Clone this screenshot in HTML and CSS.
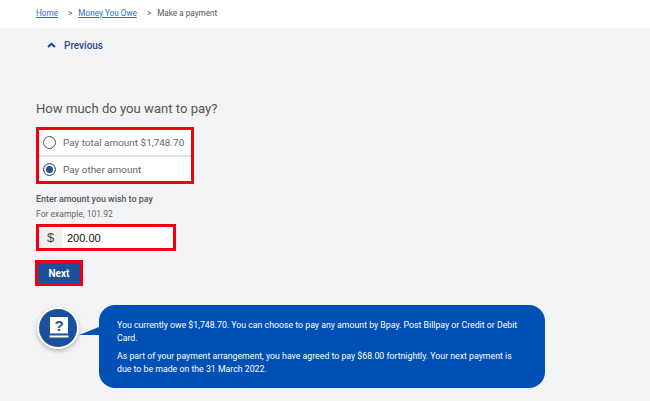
FILE: index.html
```html
<!DOCTYPE html>
<html>
<head>
  <meta charset="utf-8">
  <title>Make a payment</title>
  <link rel="stylesheet" href="styles.css">
</head>
<body>
  <div class="breadcrumb">
    <a href="#">Home</a>
    <span class="sep">&gt;</span>
    <a href="#">Money You Owe</a>
    <span class="sep">&gt;</span>
    <span class="current">Make a payment</span>
  </div>

  <div class="main">
    <div class="previous">
      <svg class="chevron" width="9" height="6" viewBox="0 0 9 6"><path d="M1 5 L4.5 1.8 L8 5" fill="none" stroke="#1a3f8f" stroke-width="2"/></svg>
      <span>Previous</span>
    </div>

    <h1>How much do you want to pay?</h1>

    <div class="radio-group">
      <div class="radio-row divider">
        <span class="radio"></span>
        <span>Pay total amount $1,748.70</span>
      </div>
      <div class="radio-row">
        <span class="radio checked"></span>
        <span>Pay other amount</span>
      </div>
    </div>

    <div class="field-label">Enter amount you wish to pay</div>
    <div class="field-hint">For example, 101.92</div>

    <div class="amount">
      <span class="prefix">$</span>
      <span class="value">200.00</span>
    </div>

    <div class="next-wrap">
      <button class="next">Next</button>
    </div>

    <div class="help">
      <div class="help-icon">
        <svg width="38" height="38" viewBox="0 0 38 38">
          <circle cx="19" cy="19" r="19" fill="#1c4f9c"/>
          <path d="M11 8 H29 V24.5 H11 Z" fill="#fff"/>
          <path d="M10.5 26.5 H29.5 V28.5 H11.5 Q10.5 28.5 10.5 27.5 Z" fill="#fff"/>
          <text x="20" y="21.5" text-anchor="middle" class="help-mark">?</text>
        </svg>
      </div>
      <div class="bubble">
        <p>You currently owe $1,748.70. You can choose to pay any amount by Bpay. Post Billpay or Credit or Debit Card.</p>
        <p>As part of your payment arrangement, you have agreed to pay $68.00 fortnightly. Your next payment is due to be made on the 31 March 2022.</p>
      </div>
    </div>
  </div>
</body>
</html>
```

FILE: styles.css
```css
html, body {
  margin: 0;
  padding: 0;
}

body {
  font-family: Roboto, "Open Sans", Arial, sans-serif;
  background: #f2f3f5;
  color: #555;
  height: 401px;
  overflow: hidden;
}

.breadcrumb {
  background: white;
  height: 28px;
  padding-left: 36px;
  display: flex;
  align-items: center;
  font-size: 8.2px;
  padding-bottom: 3px;
  box-sizing: border-box;
}

.breadcrumb a {
  color: #2f6fc4;
}

.sep {
  margin: 0 6px 0 10px;
  color: #666;
}

.current {
  color: #555;
}

.main {
  padding-left: 36px;
}

.previous {
  display: flex;
  align-items: center;
  height: 34px;
  padding-left: 11px;
  gap: 8px;
  color: #2a4a8f;
  font-size: 10px;
  font-weight: 500;
}

h1 {
  margin: 37px 0 0;
  font-size: 13.1px;
  line-height: 20px;
  font-weight: 400;
  color: #555;
}

.radio-group {
  width: 152px;
  margin-top: 8px;
  border: 3px solid #ee0011;
  background: white;
}

.radio-row {
  height: 24px;
  display: flex;
  align-items: center;
  padding-left: 4px;
  gap: 7px;
  font-size: 9.95px;
  color: #666;
}

.divider {
  height: 25px;
  border-bottom: 2px solid #e2e2e2;
}

.radio {
  width: 11px;
  height: 11px;
  border: 1px solid #555;
  border-radius: 50%;
  background: white;
  flex: none;
}

.radio.checked {
  background: #1c4f9c;
  box-shadow: inset 0 0 0 2px white;
}

.field-label {
  margin-top: 9px;
  font-size: 8.9px;
  line-height: 12px;
  font-weight: 500;
  color: #555;
}

.field-hint {
  margin-top: 3px;
  font-size: 8.55px;
  line-height: 12px;
  color: #666;
}

.amount {
  width: 134px;
  height: 21px;
  margin-top: 4px;
  border: 3px solid #ee0011;
  background: white;
  display: flex;
  align-items: center;
}

.prefix {
  width: 23px;
  height: 100%;
  background: #f0f0f0;
  display: flex;
  align-items: center;
  justify-content: center;
  font-family: "Liberation Sans", Arial, sans-serif;
  font-size: 13px;
  color: #444;
}

.value {
  padding-left: 5px;
  font-family: "Liberation Sans", Arial, sans-serif;
  font-size: 11px;
  color: #111;
}

.next-wrap {
  margin: 9px 0 0 -1px;
}

.next {
  display: block;
  width: 48px;
  height: 26px;
  padding: 0;
  border: 3px solid #ee0011;
  background: #1c4f9c;
  color: white;
  font-family: Roboto, Arial, sans-serif;
  font-size: 10px;
  font-weight: 700;
}

.help {
  display: flex;
  margin-top: 19px;
  align-items: flex-start;
}

.help-icon {
  width: 38px;
  height: 38px;
  margin: 4px 22px 0 3px;
  border-radius: 50%;
  box-shadow: 0 0 0 2px white, 0 2px 4px 2px rgba(0, 0, 0, 0.25);
  flex: none;
}

.help-icon svg {
  display: block;
}

.help-mark {
  font-family: "Liberation Sans", Arial, sans-serif;
  font-size: 15px;
  font-weight: 700;
  fill: #1c4f9c;
}

.bubble {
  position: relative;
  width: 446px;
  height: 83px;
  box-sizing: border-box;
  padding: 14px 20px 0 18px;
  background: #0050b5;
  border-radius: 16px;
  color: white;
  font-size: 8.75px;
  line-height: 13px;
}

.bubble::before {
  content: "";
  position: absolute;
  left: -20px;
  top: 22px;
  border-style: solid;
  border-width: 8px 20px 0 0;
  border-color: transparent;
  border-right-color: #0050b5;
}

.bubble p {
  margin: 0 0 5px;
}
```
